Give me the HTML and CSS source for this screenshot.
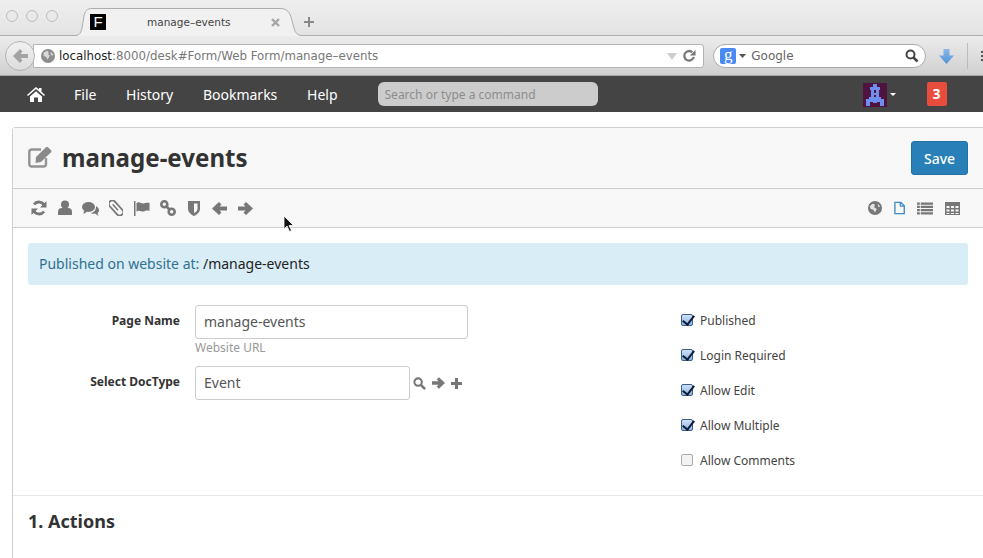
FILE: index.html
```html
<!DOCTYPE html>
<html lang="en">
<head>
    <meta charset="UTF-8">
    <meta name="viewport" content="width=device-width, initial-scale=1.0">
    <title>manage-events</title>
    <link rel="stylesheet" href="styles.css">
</head>
<body>
    <div class="tabstrip">
        <div class="traffic"><span></span><span></span><span></span></div>
        <div class="tab">
            <svg class="tab-shape" width="232" height="28" viewBox="0 0 232 28"><path d="M0 27.500H3C8 27.500 9 24 10 20L12 8C13 3 15 .5 20 .5H208C214 .5 217 3 219 9L222 20C223 25 226 27.500 230 27.500H232V28H0z" fill="#f1f1f1"/><path d="M0 27.500H3C8 27.500 9 24 10 20L12 8C13 3 15 .5 20 .5H208C214 .5 217 3 219 9L222 20C223 25 226 27.500 230 27.500H232" fill="none" stroke="#adadad"/></svg>
            <span class="favicon">F</span>
            <span class="tab-title">manage&#8211;events</span>
            <svg class="tab-close" width="9" height="9" viewBox="0 0 9 9"><path d="M1 1l7 7M8 1 1 8" stroke="#a5a5a5" stroke-width="2.400"/></svg>
        </div>
        <svg class="new-tab" width="10" height="10" viewBox="0 0 10 10"><path d="M4 0h2v4h4v2H6v4H4V6H0V4h4z" fill="#888"/></svg>
    </div>

    <div class="urlbar">
        <div class="back">
            <svg width="15" height="14" viewBox="0 0 15 14"><path d="M7 0 0 7l7 7 2.500-2.500L7.500 9H15V5H7.500l2-2.500z" fill="#a3a3a3"/></svg>
        </div>
        <div class="address">
            <svg class="globe" width="14" height="14" viewBox="0 0 16 16"><circle cx="8" cy="8" r="8" fill="#8d8d8d"/><path d="M3 4l4-2 2 2-1 2 2 1-1 3-2 2-1-3-3-1zM11 3l3 3-1 2-2-2z" fill="#d8d8d8"/></svg>
            <span class="host">localhost</span><span class="path">:8000/desk#Form/Web Form/manage&#8211;events</span>
            <svg class="drop" width="10" height="7" viewBox="0 0 10 7"><path d="M0 0h10L5 7z" fill="#cfcfcf"/></svg>
            <svg width="14" height="14" viewBox="0 0 16 16"><path d="M13.500 9a5.500 5.500 0 1 1-1.700-5.300" fill="none" stroke="#777" stroke-width="2.600"/><path d="M15.500 1v6.500H9z" fill="#777"/></svg>
        </div>
        <div class="searchbox">
            <span class="g-icon">g</span>
            <svg width="7" height="4" viewBox="0 0 7 4"><path d="M0 0h7L3.500 4z" fill="#555"/></svg>
            <span class="search-label">Google</span>
            <svg class="search-go" width="14" height="14" viewBox="0 0 14 14"><circle cx="5.500" cy="5.500" r="4" fill="none" stroke="#444" stroke-width="2"/><path d="M8.500 8.500l4 4" stroke="#444" stroke-width="2.500"/></svg>
        </div>
        <svg class="download" width="15" height="15" viewBox="0 0 15 15"><defs><linearGradient id="dl" x1="0" y1="0" x2="0" y2="1"><stop offset="0" stop-color="#8bb8e8"/><stop offset="1" stop-color="#4f93d8"/></linearGradient></defs><path d="M4.500 0h6v6.500H15L7.500 15 0 6.500h4.500z" fill="url(#dl)"/></svg>
        <div class="bar-sep"></div>
        <div class="bar-dots"><i></i><i></i><i></i></div>
    </div>

    <nav class="navbar">
        <svg class="home" width="18" height="15" viewBox="0 0 18 15"><path d="M9 0l3 2.600V1h2.500v3.800L18 8l-1 1-8-7-8 7-1-1zM3 9.500 9 4.300l6 5.200V15h-4v-4.500H7V15H3z" fill="#fff"/></svg>
        <a class="nav-link">File</a>
        <a class="nav-link">History</a>
        <a class="nav-link">Bookmarks</a>
        <a class="nav-link">Help</a>
        <div class="command">Search or type a command</div>
        <div class="avatar">
            <svg width="24" height="24" viewBox="0 0 24 24" shape-rendering="crispEdges"><rect width="24" height="24" fill="#4f1340"/><path d="M10 1h4v3h3v3h-1v7h2v2h3v7h-4v-4h-3v1h-4v-1H7v4H3v-7h3v-2h2V7H7V4h3zM11 7v3h2V7zM11 12v2h2v-2z" fill="#6f8ff0" fill-rule="evenodd"/></svg>
        </div>
        <span class="caret"></span>
        <span class="badge">3</span>
    </nav>

    <main class="page">
        <div class="card">
            <header class="card-head">
                <h1 class="title">
                    <svg width="24" height="22" viewBox="0 0 24 22"><path d="M18 12v6a2.500 2.500 0 0 1-2.500 2.500h-12A2.500 2.500 0 0 1 1.300 18V6a2.500 2.500 0 0 1 2.200-2.500H13" fill="none" stroke="#949494" stroke-width="2.400"/><path d="M8 11 18 1.200a1.500 1.500 0 0 1 2 0l3 3a1.500 1.500 0 0 1 0 2L13 16l-5.500 1z" fill="#8a8a8a"/></svg>
                    manage-events
                </h1>
                <button class="save">Save</button>
            </header>

            <div class="toolbar">
                <div class="tool-group actions">
                    <svg width="16" height="16" viewBox="0 0 16 16"><path d="M13.500 6A6 6 0 0 0 3 4.500M2.500 10A6 6 0 0 0 13 11.500" fill="none" stroke="#777" stroke-width="2.800"/><path d="M15.500 1v6.500H9zM.5 15V8.500H7z" fill="#777"/></svg>
                    <svg width="14" height="16" viewBox="0 0 14 16"><circle cx="7" cy="4.500" r="4" fill="#777"/><path d="M0 15v-3a4 4 0 0 1 4-4h6a4 4 0 0 1 4 4v3z" fill="#777"/></svg>
                    <svg width="17" height="15" viewBox="0 0 17 15"><ellipse cx="6.500" cy="6" rx="6.500" ry="5" fill="#777"/><path d="M2 9.500 1.500 13l4-2.500zM14 5c2 1 3 3 3 4.500S16 12 15.500 12l1 3-3.500-2.500c-2 .5-3.500 0-4.500-.5 3 0 6-3 5.500-7z" fill="#777"/></svg>
                    <svg width="14" height="16" viewBox="0 0 14 16"><g transform="rotate(-42 7 8)" fill="none" stroke="#777"><rect x="3.500" y="-1" width="7" height="18" rx="3.500" stroke-width="1.800"/><path d="M7 3v8" stroke-width="1.400"/></g></svg>
                    <svg width="16" height="15" viewBox="0 0 16 15"><path d="M0 0h1.500v15H0z" fill="#777"/><path d="M2.500 2c3-2 5 1 7 .5s3-1 6-.5v8c-3-1-4 0-6 .5s-4-2-7 0z" fill="#777"/></svg>
                    <svg width="16" height="16" viewBox="0 0 16 16"><g fill="none" stroke="#777" stroke-width="2.600"><circle cx="4.300" cy="4.300" r="3"/><circle cx="11.700" cy="11.700" r="3"/><path d="M6.500 6.500l3 3"/></g></svg>
                    <svg width="12" height="15" viewBox="0 0 12 15"><path d="M0 0h12v8c0 3-3 5.500-6 7-3-1.500-6-4-6-7zM6 2.500v9.500c2-1 3.500-2.500 3.500-4.500v-5z" fill="#777" fill-rule="evenodd"/></svg>
                    <svg width="15" height="13" viewBox="0 0 15 13"><path d="M7 0 0 6.500 7 13l2.500-2.500-2-2H15v-4H7.500l2-2z" fill="#777"/></svg>
                    <svg width="15" height="13" viewBox="0 0 15 13"><path d="M8 0l7 6.500L8 13l-2.500-2.500 2-2H0v-4h7.500l-2-2z" fill="#777"/></svg>
                </div>
                <div class="tool-group views">
                    <svg width="14" height="14" viewBox="0 0 16 16"><circle cx="8" cy="8" r="8" fill="#777"/><path d="M2 6l3-3 3 1-1 3 3 2-2 4-2-3-3-1zM11 3l3 3-2 1z" fill="#e4e4e4"/></svg>
                    <svg width="11" height="14" viewBox="0 0 12 14"><path d="M1 .8h6.500L11.200 4.500v8.700H1zM7 1v4h4" fill="none" stroke="#428bca" stroke-width="1.500"/></svg>
                    <svg width="16" height="13" viewBox="0 0 17 13"><path d="M0 0h3v2.500H0zM4 0h13v2.500H4zM0 3.500h3V6H0zM4 3.500h13V6H4zM0 7h3v2.500H0zM4 7h13v2.500H4zM0 10.500h3V13H0zM4 10.500h13V13H4z" fill="#777"/></svg>
                    <svg width="15" height="13" viewBox="0 0 15 13"><path d="M0 0h15v13H0zM1.500 4v2h3V4zm4.500 0v2h3V4zm4.500 0v2h3V4zM1.500 7.500v2h3v-2zm4.500 0v2h3v-2zm4.500 0v2h3v-2zM1.500 11v1h3v-1zm4.500 0v1h3v-1zm4.500 0v1h3v-1z" fill="#777" fill-rule="evenodd"/></svg>
                </div>
            </div>

            <div class="card-body">
                <div class="alert">Published on website at: <a>/manage-events</a></div>

                <div class="form">
                    <div class="form-left">
                        <div class="field">
                            <label>Page Name</label>
                            <div class="control">
                                <div class="input">manage-events</div>
                                <p class="help">Website URL</p>
                            </div>
                        </div>
                        <div class="field">
                            <label>Select DocType</label>
                            <div class="control link-control">
                                <div class="input short">Event</div>
                                <svg width="13" height="13" viewBox="0 0 14 14"><circle cx="5.500" cy="5.500" r="4" fill="none" stroke="#777" stroke-width="2.200"/><path d="M8.500 8.500l4.500 4.500" stroke="#777" stroke-width="2.800"/></svg>
                                <svg width="13" height="12" viewBox="0 0 15 13"><path d="M8 0l7 6.500L8 13l-2.500-2.500 2-2H0v-4h7.500l-2-2z" fill="#777"/></svg>
                                <svg width="11" height="11" viewBox="0 0 11 11"><path d="M4 0h3v4h4v3H7v4H4V7H0V4h4z" fill="#777"/></svg>
                            </div>
                        </div>
                    </div>
                    <div class="form-right">
                        <label class="check"><span class="box on"></span>Published</label>
                        <label class="check"><span class="box on"></span>Login Required</label>
                        <label class="check"><span class="box on"></span>Allow Edit</label>
                        <label class="check"><span class="box on"></span>Allow Multiple</label>
                        <label class="check"><span class="box"></span>Allow Comments</label>
                    </div>
                </div>

                <h2 class="section">1. Actions</h2>
            </div>
        </div>
    </main>

    <svg class="cursor" width="12" height="18" viewBox="0 0 12 18"><path d="M1 1v13l3-3 2.500 5.500 2-1L6 10.500h4.500z" fill="#111" stroke="#fff" stroke-width=".8"/></svg>
</body>
</html>
```

FILE: styles.css
```css
* {
    box-sizing: border-box;
}

html, body {
    height: 100%;
}

body {
    margin: 0;
    overflow: hidden;
    display: flex;
    flex-direction: column;
    background-color: #fff;
    color: #36414c;
    font-family: 'Noto Sans', sans-serif;
}

/* browser chrome */
.tabstrip {
    height: 36px;
    flex: none;
    display: flex;
    align-items: flex-end;
    background: linear-gradient(#efefef, #e3e3e3);
    border-bottom: 1px solid #adadad;
}

.traffic {
    width: 72px;
    align-self: flex-start;
    display: flex;
    gap: 8px;
    padding: 10px 0 0 6px;
}

.traffic span {
    width: 12px;
    height: 12px;
    border-radius: 50%;
    border: 1px solid #bdbdbd;
    background-color: #e9e9e9;
}

.tab {
    width: 232px;
    height: 28px;
    margin-bottom: -1px;
    padding: 0 24px 0 18px;
    position: relative;
    display: flex;
    align-items: center;
    font-family: 'DejaVu Sans', sans-serif;
    font-size: 10.500px;
    color: #444;
}

.tab-shape {
    position: absolute;
    left: 0;
    top: 0;
}

.favicon {
    width: 16px;
    height: 16px;
    position: relative;
    background-color: #000;
    color: #fff;
    font: 15px/16px 'Liberation Sans', sans-serif;
    text-align: center;
}

.tab-title {
    flex: 1;
    position: relative;
    padding-left: 41px;
}

.tab-close {
    position: relative;
}

.new-tab {
    align-self: flex-start;
    margin-top: 17px;
}

.urlbar {
    height: 40px;
    flex: none;
    position: relative;
    display: flex;
    align-items: center;
    padding: 1px 0 0 33px;
    background: linear-gradient(#ececec, #d0d0d0);
    border-bottom: 1px solid #a8a8a8;
    font-family: 'DejaVu Sans', sans-serif;
}

.back {
    position: absolute;
    left: 5px;
    top: 5px;
    width: 30px;
    height: 30px;
    display: flex;
    align-items: center;
    justify-content: center;
    border: 1px solid #b4b4b4;
    border-radius: 50%;
    background: linear-gradient(#f2f2f2, #dcdcdc);
    z-index: 1;
}

.address {
    width: 672px;
    height: 24px;
    padding: 0 7px;
    display: flex;
    align-items: center;
    background-color: #fff;
    border: 1px solid #b4b4b4;
    border-radius: 0 3px 3px 0;
    font-size: 11.800px;
    color: #777;
}

.globe {
    margin-right: 4px;
}

.host {
    color: #222;
}

.path {
    flex: 1;
}

.drop {
    margin-right: 5px;
}

.searchbox {
    width: 213px;
    height: 24px;
    margin-left: 9px;
    padding: 0 6px;
    display: flex;
    align-items: center;
    gap: 3px;
    background-color: #fff;
    border: 1px solid #a9a9a9;
    border-radius: 12px;
    font-size: 12px;
    color: #666;
}

.g-icon {
    width: 16px;
    height: 16px;
    background-color: #4a8af4;
    color: #fff;
    text-align: center;
    font: 17px/13px 'Liberation Serif', serif;
    border-radius: 2px;
}

.search-label {
    flex: 1;
    padding-left: 2px;
}

.download {
    margin-left: 13px;
}

.bar-sep {
    width: 1px;
    height: 26px;
    margin-left: 13px;
    background-color: #bbb;
}

.bar-dots {
    margin-left: 13px;
    display: flex;
    flex-direction: column;
    gap: 2px;
}

.bar-dots i {
    width: 2px;
    height: 2px;
    background-color: #555;
}

/* app navbar */
.navbar {
    height: 36px;
    flex: none;
    display: flex;
    align-items: center;
    padding-left: 27px;
    background-color: #444;
    color: #fff;
}

.nav-link {
    font-size: 14px;
    margin-right: 29.700px;
}

.home {
    margin-right: 29px;
}

.nav-link:nth-of-type(4) {
    margin-right: 40px;
}

.command {
    width: 220px;
    height: 24px;
    padding-left: 7px;
    background-color: #ccc;
    border-radius: 6px;
    color: #8c8c8c;
    font-size: 12px;
    line-height: 25px;
}

.avatar {
    display: flex;
    margin: 2px 0 0 265px;
}

.caret {
    margin-left: 3px;
    border: 3px solid transparent;
    border-top-color: #fff;
    border-bottom: none;
}

.badge {
    width: 20px;
    height: 24px;
    margin-left: 31px;
    background-color: #e74c3c;
    border-radius: 2px;
    text-align: center;
    font-size: 14px;
    font-weight: 700;
    line-height: 24px;
}

/* form page */
.page {
    flex: 1;
    min-height: 0;
    display: flex;
    padding: 15px 0 0 12px;
    background-color: #fff;
}

.card {
    flex: 1;
    border: 1px solid #cfcfcf;
    border-width: 1px 0 0 1px;
    border-radius: 4px 0 0 0;
}

.card-head,
.toolbar {
    background: repeating-conic-gradient(#f5f5f5 0 25%, #fafafa 0 50%) 0 0/2px 2px;
    border-bottom: 1px solid #cdcdcd;
}

.card-head {
    height: 61px;
    padding: 0 15px;
    display: flex;
    align-items: center;
    justify-content: space-between;
}

.title {
    margin: -2px 0 0;
    display: flex;
    align-items: center;
    gap: 10px;
    font-size: 24.100px;
    font-weight: 700;
    color: #333;
}

.save {
    width: 57px;
    height: 34px;
    background-color: #2980b9;
    border: 1px solid #2472a4;
    border-radius: 3px;
    color: #fff;
    font-family: inherit;
    font-size: 14px;
    font-weight: 500;
    cursor: pointer;
}

.toolbar {
    height: 39px;
    padding: 0 23px 0 13px;
    display: flex;
    align-items: center;
    justify-content: space-between;
}

.tool-group {
    display: flex;
    align-items: center;
    gap: 12px;
}

.actions {
    display: grid;
    grid-auto-flow: column;
    grid-auto-columns: 25.800px;
    gap: 0;
    justify-items: center;
}

.card-body {
    padding: 15px 15px 0;
}

.alert {
    height: 42px;
    padding-left: 11px;
    background-color: #d9edf7;
    border-radius: 3px;
    color: #31708f;
    font-size: 14px;
    line-height: 42px;
}

.alert a {
    color: #222;
}

.form {
    display: flex;
    margin-top: 20px;
    height: 190px;
}

.form-left {
    width: 653px;
    display: flex;
    flex-direction: column;
    gap: 9px;
}

.field {
    display: flex;
    gap: 15px;
}

.field label {
    width: 152px;
    padding-top: 7px;
    text-align: right;
    font-size: 12px;
    font-weight: 700;
    color: #333;
}

.control {
    flex: 1;
}

.link-control {
    display: flex;
    align-items: center;
    gap: 6px;
}

.input {
    width: 273px;
    height: 34px;
    padding-left: 8px;
    background-color: #fff;
    border: 1px solid #ccc;
    border-radius: 3px;
    color: #555;
    font-size: 14px;
    line-height: 32px;
}

.input.short {
    width: 215px;
    margin-right: -3px;
}

.help {
    margin: 0;
    color: #999;
    font-size: 12px;
    line-height: 18px;
}

.form-right {
    display: flex;
    flex-direction: column;
    gap: 17px;
    padding-top: 6px;
}

.check {
    height: 18px;
    display: flex;
    align-items: center;
    gap: 7px;
    font-size: 12px;
    color: #444;
}

.box {
    width: 12px;
    height: 12px;
    position: relative;
    background-color: #f2f2f2;
    border: 1px solid #aaa;
    border-radius: 2px;
}

.box.on {
    background: linear-gradient(#cfe0f5, #8fb5e5);
    border-color: #3b5f8c;
}

.box.on::after {
    content: "";
    position: absolute;
    left: 3px;
    top: -2px;
    width: 5px;
    height: 10px;
    border: solid #0e1d36;
    border-width: 0 2.500px 2.500px 0;
    transform: rotate(38deg);
}

.section {
    margin: 0 -15px;
    padding: 13px 15px 0;
    border-top: 1px solid #e8e8e8;
    font-size: 18px;
    font-weight: 700;
    color: #333;
}

/* mouse pointer on top of the page */
.cursor {
    position: absolute;
    left: 283px;
    top: 215px;
}
```
